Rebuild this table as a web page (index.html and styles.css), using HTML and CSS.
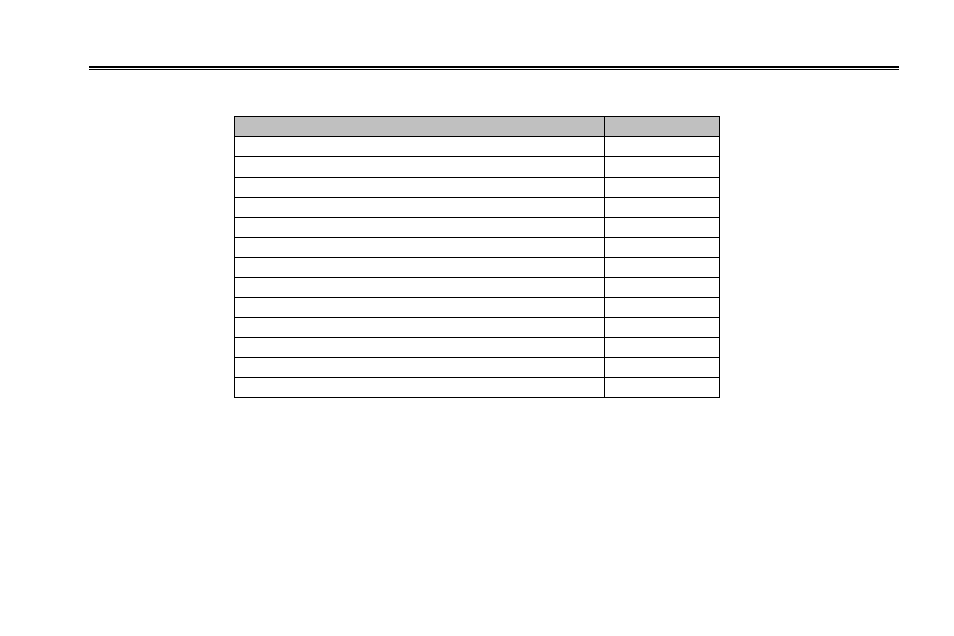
FILE: index.html
```html
<!DOCTYPE html>
<html>
<head>
<meta charset="utf-8">
<link rel="stylesheet" href="styles.css">
</head>
<body>
<div class="page">
  <div class="rule"></div>
  <div class="grid">
    <div class="cell head"></div><div class="cell head"></div>
    <div class="cell"></div><div class="cell"></div>
    <div class="cell tall"></div><div class="cell tall"></div>
    <div class="cell"></div><div class="cell"></div>
    <div class="cell"></div><div class="cell"></div>
    <div class="cell"></div><div class="cell"></div>
    <div class="cell"></div><div class="cell"></div>
    <div class="cell"></div><div class="cell"></div>
    <div class="cell"></div><div class="cell"></div>
    <div class="cell"></div><div class="cell"></div>
    <div class="cell"></div><div class="cell"></div>
    <div class="cell"></div><div class="cell"></div>
    <div class="cell"></div><div class="cell"></div>
    <div class="cell"></div><div class="cell"></div>
  </div>
</div>
</body>
</html>
```

FILE: styles.css
```css
html, body {
  margin: 0;
  padding: 0;
  background: #ffffff;
  font-family: "Liberation Sans", Arial, sans-serif;
}
.page {
  padding-top: 66px;
  padding-left: 89px;
}
.rule {
  width: 810px;
  height: 1px;
  border-top: 2px solid #000;
  border-bottom: 1px solid #000;
}
.grid {
  margin-top: 46px;
  margin-left: 145px;
  width: 485px;
  border-top: 1px solid #000;
  border-left: 1px solid #000;
  display: grid;
  grid-template-columns: 370px 115px;
}
.cell {
  box-sizing: border-box;
  height: 20px;
  border-right: 1px solid #000;
  border-bottom: 1px solid #000;
}
.cell.tall {
  height: 21px;
}
.cell.head {
  background: #c0c0c0;
}
```
